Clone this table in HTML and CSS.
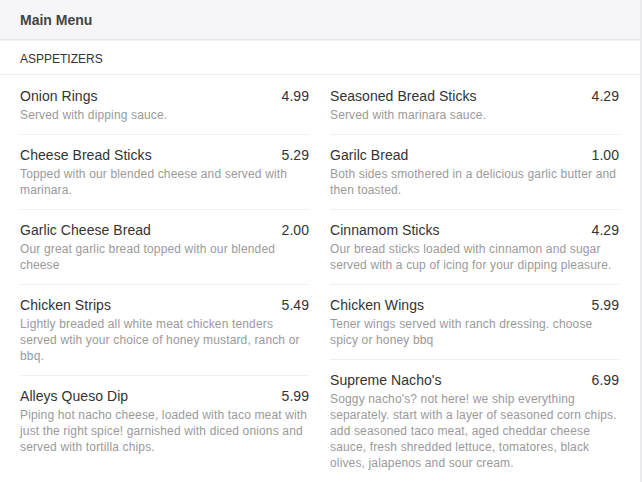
FILE: index.html
```html
<!DOCTYPE html>
<html>
<head>
<meta charset="utf-8">
<link rel="stylesheet" href="styles.css">
</head>
<body>
<div class="page">
  <div class="header">Main Menu</div>
  <div class="section">ASPPETIZERS</div>
  <div class="columns">
    <div class="col">
      <div class="item">
        <div class="row"><span class="name">Onion Rings</span><span class="price">4.99</span></div>
        <div class="desc">Served with dipping sauce.</div>
      </div>
      <div class="item">
        <div class="row"><span class="name">Cheese Bread Sticks</span><span class="price">5.29</span></div>
        <div class="desc">Topped with our blended cheese and served with marinara.</div>
      </div>
      <div class="item">
        <div class="row"><span class="name">Garlic Cheese Bread</span><span class="price">2.00</span></div>
        <div class="desc">Our great garlic bread topped with our blended cheese</div>
      </div>
      <div class="item">
        <div class="row"><span class="name">Chicken Strips</span><span class="price">5.49</span></div>
        <div class="desc">Lightly breaded all white meat chicken tenders served wtih your choice of honey mustard, ranch or bbq.</div>
      </div>
      <div class="item last">
        <div class="row"><span class="name">Alleys Queso Dip</span><span class="price">5.99</span></div>
        <div class="desc">Piping hot nacho cheese, loaded with taco meat with just the right spice! garnished with diced onions and served with tortilla chips.</div>
      </div>
    </div>
    <div class="col">
      <div class="item">
        <div class="row"><span class="name">Seasoned Bread Sticks</span><span class="price">4.29</span></div>
        <div class="desc">Served with marinara sauce.</div>
      </div>
      <div class="item">
        <div class="row"><span class="name">Garilc Bread</span><span class="price">1.00</span></div>
        <div class="desc">Both sides smothered in a delicious garlic butter and then toasted.</div>
      </div>
      <div class="item">
        <div class="row"><span class="name">Cinnamom Sticks</span><span class="price">4.29</span></div>
        <div class="desc">Our bread sticks loaded with cinnamon and sugar served with a cup of icing for your dipping pleasure.</div>
      </div>
      <div class="item">
        <div class="row"><span class="name">Chicken Wings</span><span class="price">5.99</span></div>
        <div class="desc">Tener wings served with ranch dressing. choose spicy or honey bbq</div>
      </div>
      <div class="item last">
        <div class="row"><span class="name">Supreme Nacho's</span><span class="price">6.99</span></div>
        <div class="desc">Soggy nacho's? not here! we ship everything separately. start with a layer of seasoned corn chips. add seasoned taco meat, aged cheddar cheese sauce, fresh shredded lettuce, tomatores, black olives, jalapenos and sour cream.</div>
      </div>
    </div>
  </div>
</div>
</body>
</html>
```
FILE: styles.css
```css
html, body {
  margin: 0;
  padding: 0;
  background: #ffffff;
}
body {
  font-family: "Liberation Sans", Arial, sans-serif;
  color: #333333;
}
.page {
  width: 640px;
  min-height: 482px;
  border-right: 2px solid #ececf0;
}
.header {
  height: 40px;
  box-sizing: border-box;
  background: #f6f6f8;
  border-bottom: 1px solid #e6e6e9;
  padding: 11px 20px 0;
  font-size: 14px;
  font-weight: bold;
  line-height: 18px;
  color: #444444;
}
.section {
  height: 35px;
  box-sizing: border-box;
  border-bottom: 1px solid #ececef;
  padding: 10px 20px 0;
  font-size: 12px;
  line-height: 16px;
  color: #333333;
  border-top: 1px solid #f4f4f6;
}
.columns {
  display: flex;
  gap: 21px;
  padding: 1px 21px 0 20px;
}
.col {
  flex: 1;
  min-width: 0;
  display: flex;
  flex-direction: column;
}
.item {
  padding: 10px 0 11px;
  border-bottom: 1px solid #efeff1;
}
.item.last {
  border-bottom: none;
}
.row {
  display: flex;
  justify-content: space-between;
  font-size: 14px;
  line-height: 20px;
  color: #333333;
  letter-spacing: 0.05px;
}
.desc {
  margin-top: 1px;
  font-size: 12px;
  line-height: 16px;
  color: #9a9a9a;
  letter-spacing: 0.15px;
}
```
